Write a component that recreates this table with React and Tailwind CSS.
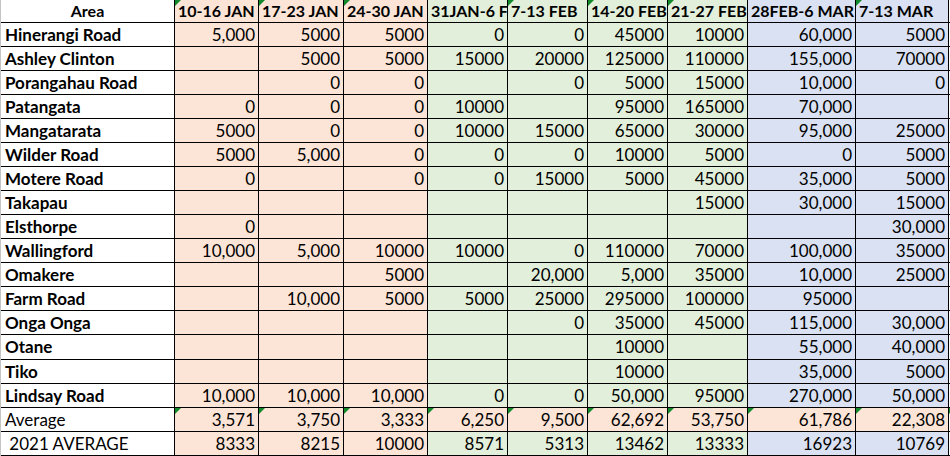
import React from "react";

const widths = [
  "w-[174px]",
  "w-[84px]",
  "w-[85px]",
  "w-[84px]",
  "w-[80px]",
  "w-[80px]",
  "w-[80px]",
  "w-[80px]",
  "w-[108px]",
  "w-[93px]",
];

const tints = {
  peach: "bg-[#fce4d6]",
  green: "bg-[#e2efda]",
  blue: "bg-[#d9e1f2]",
};

const colTint = ["peach", "peach", "peach", "green", "green", "green", "green", "blue", "blue"];

const headers = [
  { label: "10-16 JAN", flag: true },
  { label: "17-23 JAN", flag: true },
  { label: "24-30 JAN", flag: true },
  { label: "31JAN-6 FEB", flag: false },
  { label: "7-13 FEB", flag: true },
  { label: "14-20 FEB", flag: true },
  { label: "21-27 FEB", flag: true },
  { label: "28FEB-6 MAR", flag: false },
  { label: "7-13 MAR", flag: true },
];

const rows = [
  ["Hinerangi Road", "5,000", "5000", "5000", "0", "0", "45000", "10000", "60,000", "5000"],
  ["Ashley Clinton", "", "5000", "5000", "15000", "20000", "125000", "110000", "155,000", "70000"],
  ["Porangahau Road", "", "0", "0", "", "0", "5000", "15000", "10,000", "0"],
  ["Patangata", "0", "0", "0", "10000", "", "95000", "165000", "70,000", ""],
  ["Mangatarata", "5000", "0", "0", "10000", "15000", "65000", "30000", "95,000", "25000"],
  ["Wilder Road", "5000", "5,000", "0", "0", "0", "10000", "5000", "0", "5000"],
  ["Motere Road", "0", "", "0", "0", "15000", "5000", "45000", "35,000", "5000"],
  ["Takapau", "", "", "", "", "", "", "15000", "30,000", "15000"],
  ["Elsthorpe", "0", "", "", "", "", "", "", "", "30,000"],
  ["Wallingford", "10,000", "5,000", "10000", "10000", "0", "110000", "70000", "100,000", "35000"],
  ["Omakere", "", "", "5000", "", "20,000", "5,000", "35000", "10,000", "25000"],
  ["Farm Road", "", "10,000", "5000", "5000", "25000", "295000", "100000", "95000", ""],
  ["Onga Onga", "", "", "", "", "0", "35000", "45000", "115,000", "30,000"],
  ["Otane", "", "", "", "", "", "10000", "", "55,000", "40,000"],
  ["Tiko", "", "", "", "", "", "10000", "", "35,000", "5000"],
  ["Lindsay Road", "10,000", "10,000", "10,000", "0", "0", "50,000", "95000", "270,000", "50,000"],
];

const average = ["3,571", "3,750", "3,333", "6,250", "9,500", "62,692", "53,750", "61,786", "22,308"];
const average2021 = ["8333", "8215", "10000", "8571", "5313", "13462", "13333", "16923", "10769"];

const Flag = () => (
  <span className="absolute left-0 top-0 h-0 w-0 border-t-[6px] border-r-[6px] border-t-[#128a2b] border-r-transparent" />
);

const Cell = ({ i, tint, children, className = "", flag }) => (
  <div
    className={`relative shrink-0 overflow-hidden whitespace-pre border-r border-black ${widths[i]} ${tint || ""} ${className}`}
  >
    {flag && <Flag />}
    {children}
  </div>
);

export default function App() {
  return (
    <div className="h-[456px] w-[950px] overflow-hidden bg-white font-['Lato',sans-serif] text-[17px] text-black">
      <div className="flex flex-col border-l border-[#c4c4c4]">
        <div className="flex h-[23px] border-b border-black text-[16px] font-bold leading-[22px]">
          <Cell i={0} className="text-center">Area</Cell>
          {headers.map((h, j) => (
            <Cell key={h.label} i={j + 1} tint={tints[colTint[j]]} flag={h.flag} className="pl-[3px]">
              {h.label}
            </Cell>
          ))}
        </div>

        {rows.map((r, idx) => (
          <div
            key={r[0]}
            className={`flex border-b border-black leading-[23px] ${idx === 13 ? "h-[25px]" : "h-[24px]"}`}
          >
            <Cell i={0} className="pl-[4px] font-bold">{r[0]}</Cell>
            {r.slice(1).map((v, j) => (
              <Cell key={j} i={j + 1} tint={tints[colTint[j]]} className="pr-[3px] text-right">
                {v}
              </Cell>
            ))}
          </div>
        ))}

        <div className="flex h-[24px] border-b border-black leading-[23px]">
          <Cell i={0} className="pl-[4px]">Average</Cell>
          {average.map((v, j) => (
            <Cell key={j} i={j + 1} tint={tints.peach} flag className="pr-[3px] text-right">
              {v}
            </Cell>
          ))}
          <div className="relative w-[1px] shrink-0 overflow-hidden">
            <Flag />
          </div>
        </div>

        <div className="flex h-[24px] border-b border-black leading-[23px]">
          <Cell i={0} className="pl-[4px]">{" 2021 AVERAGE"}</Cell>
          {average2021.map((v, j) => (
            <Cell key={j} i={j + 1} tint={tints[colTint[j]]} className="pr-[3px] text-right">
              {v}
            </Cell>
          ))}
        </div>
      </div>
    </div>
  );
}
